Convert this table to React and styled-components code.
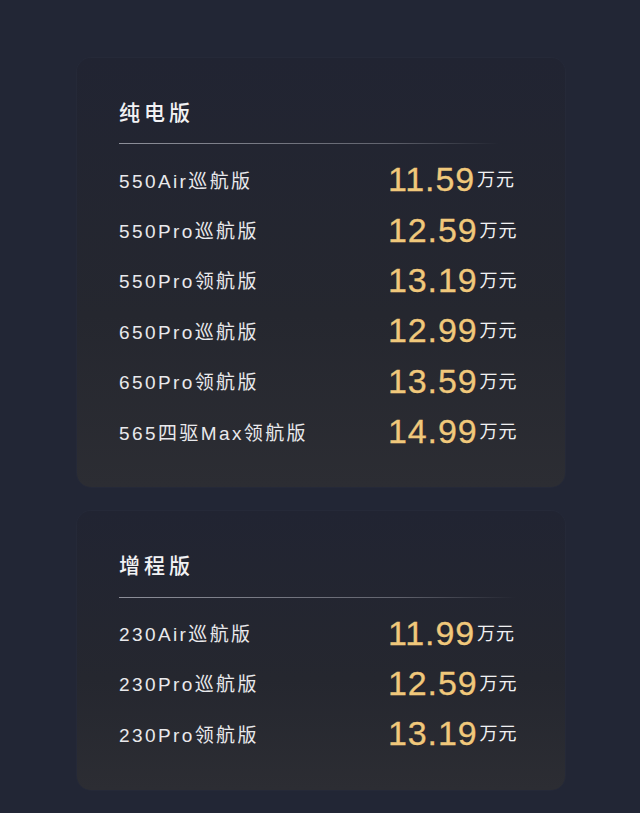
import React from 'react'
import styled, { createGlobalStyle } from 'styled-components';

const GlobalStyle = createGlobalStyle`
  html, body {
    margin: 0;
    padding: 0;
    background: #222635;
  }
  body {
    font-family: "Liberation Sans", "Noto Sans CJK SC", sans-serif;
  }
`;

const Page = styled.div`
  width: 640px;
  min-height: 813px;
  box-sizing: border-box;
  padding: 58px 0 0 77px;
  display: flex;
  flex-direction: column;
  gap: 24px;
  background: #222635;
`;

const Card = styled.div`
  width: 488px;
  box-sizing: border-box;
  padding: 38px 0 31px 42px;
  border-radius: 14px;
  background: linear-gradient(180deg, #212432 0%, #25272f 60%, #2c2d33 100%);
  box-shadow: 0 0 0 1px rgba(255, 255, 255, 0.015);
`;

const Title = styled.div`
  height: 30px;
  line-height: 30px;
  font-family: "Noto Sans CJK SC", sans-serif;
  font-size: 21px;
  font-weight: 500;
  letter-spacing: 4px;
  color: #f2f2f4;
`;

const Divider = styled.div`
  margin: ${({ $top }) => $top}px 0 ${({ $top }) => 27 - $top}px;
  width: ${({ $w }) => $w}px;
  height: 1px;
  background: linear-gradient(90deg, rgba(160, 162, 172, 0.85) 0%, rgba(140, 142, 152, 0.6) 70%, rgba(140, 142, 152, 0) 100%);
`;

const List = styled.div`
  display: grid;
  grid-template-columns: 269px 1fr;
  grid-auto-rows: 50.4px;
  align-items: center;
`;

const Name = styled.div`
  font-size: 19px;
  letter-spacing: 2.4px;
  color: #e9e9ec;
  white-space: nowrap;
`;

const Price = styled.div`
  white-space: nowrap;
  line-height: 1;
`;

const Num = styled.span`
  font-size: 34px;
  letter-spacing: 0.9px;
  color: #f0c87b;
  -webkit-text-stroke: 0.3px #f0c87b;
`;

const Unit = styled.span`
  font-family: "Noto Sans CJK SC", sans-serif;
  font-size: 18px;
  letter-spacing: 1px;
  color: #f1f1f3;
  margin-left: 2px;
  vertical-align: 5px;
`;

const groups = [
  {
    title: '纯电版',
    line: 380,
    top: 17,
    rows: [
      ['550Air巡航版', '11.59'],
      ['550Pro巡航版', '12.59'],
      ['550Pro领航版', '13.19'],
      ['650Pro巡航版', '12.99'],
      ['650Pro领航版', '13.59'],
      ['565四驱Max领航版', '14.99'],
    ],
  },
  {
    title: '增程版',
    line: 396,
    top: 18,
    rows: [
      ['230Air巡航版', '11.99'],
      ['230Pro巡航版', '12.59'],
      ['230Pro领航版', '13.19'],
    ],
  },
];

function App() {
  return (
    <>
      <GlobalStyle />
      <Page>
        {groups.map((g) => (
          <Card key={g.title}>
            <Title>{g.title}</Title>
            <Divider $w={g.line} $top={g.top} />
            <List>
              {g.rows.map(([name, price]) => (
                <React.Fragment key={name}>
                  <Name>{name}</Name>
                  <Price>
                    <Num>{price}</Num>
                    <Unit>万元</Unit>
                  </Price>
                </React.Fragment>
              ))}
            </List>
          </Card>
        ))}
      </Page>
    </>
  )
}

export default App
